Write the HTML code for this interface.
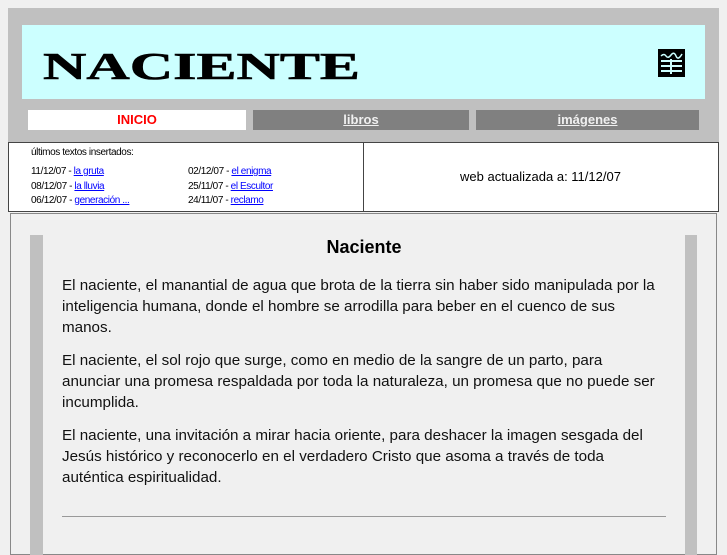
<!DOCTYPE html>
<html><head><meta charset="utf-8"><style>
body{margin:0;background:#f0f0f0;font-family:"Liberation Sans",sans-serif;width:727px;height:545px;overflow:hidden;position:relative}
.abs{position:absolute}
a{color:#0000ff}
.tab{position:absolute;top:110px;height:20px;line-height:20px;text-align:center;font-size:13px;font-weight:bold}
.tab a{color:#f0f0f0}
.small{font-size:10px;color:#000;letter-spacing:-0.4px}
p{margin:0 0 12px 0}
</style></head><body>
<div class="abs" style="left:8px;top:8px;width:711px;height:134px;background:#c0c0c0"></div>
<div class="abs" style="left:22px;top:25px;width:683px;height:74px;background:#ccffff"></div>
<div class="abs" style="left:43px;top:45px;font-family:'Liberation Serif',serif;font-weight:900;font-size:38px;line-height:44px;white-space:nowrap;transform:scaleX(1.58);transform-origin:left top;-webkit-text-stroke:0.6px #000">NACIENTE</div>
<svg class="abs" style="left:658px;top:49px" width="27" height="28" viewBox="0 0 27 28">
<rect width="27" height="28" fill="#000"/>
<path d="M3 7 Q6 4 8 7 T13 6 T18 7 T24 5" stroke="#ccffff" stroke-width="1.5" fill="none"/>
<rect x="3" y="11" width="21" height="2" fill="#ccffff"/><rect x="3" y="16" width="21" height="2" fill="#ccffff"/><rect x="3" y="21" width="21" height="2" fill="#ccffff"/>
<rect x="12" y="10" width="2" height="15" fill="#ccffff"/>
</svg>
<div class="tab" style="left:28px;width:218px;background:#fff;color:#ff0000">INICIO</div>
<div class="tab" style="left:253px;width:216px;background:#808080"><a href="#">libros</a></div>
<div class="tab" style="left:476px;width:223px;background:#808080"><a href="#">imágenes</a></div>
<div class="abs" style="left:8px;top:142px;width:709px;height:68px;background:#fff;border:1px solid #444"></div>
<div class="abs" style="left:363px;top:142px;width:1px;height:70px;background:#444"></div>
<div class="abs small" style="left:31px;top:147px">últimos textos insertados:</div>
<div class="abs small" style="left:31px;top:165px;line-height:14.5px">11/12/07 - <a href="#">la gruta</a><br>08/12/07 - <a href="#">la lluvia</a><br>06/12/07 - <a href="#">generación ...</a></div>
<div class="abs small" style="left:188px;top:165px;line-height:14.5px">02/12/07 - <a href="#">el enigma</a><br>25/11/07 - <a href="#">el Escultor</a><br>24/11/07 - <a href="#">reclamo</a></div>
<div class="abs" style="left:460px;top:169px;font-size:13px">web actualizada a: 11/12/07</div>
<div class="abs" style="left:10px;top:213px;width:705px;height:340px;border:1px solid #888;background:#f0f0f0"></div>
<div class="abs" style="left:30px;top:235px;width:13px;height:320px;background:#c0c0c0"></div>
<div class="abs" style="left:685px;top:235px;width:12px;height:320px;background:#c0c0c0"></div>
<div class="abs" style="left:43px;top:237px;width:642px;text-align:center;font-weight:bold;font-size:18px">Naciente</div>
<div class="abs" style="left:62px;top:275px;width:598px;font-size:15.2px;line-height:21px;color:#111">
<p>El naciente, el manantial de agua que brota de la tierra sin haber sido manipulada por la inteligencia humana, donde el hombre se arrodilla para beber en el cuenco de sus manos.</p>
<p>El naciente, el sol rojo que surge, como en medio de la sangre de un parto, para anunciar una promesa respaldada por toda la naturaleza, un promesa que no puede ser incumplida.</p>
<p>El naciente, una invitación a mirar hacia oriente, para deshacer la imagen sesgada del Jesús histórico y reconocerlo en el verdadero Cristo que asoma a través de toda auténtica espiritualidad.</p>
</div>
<div class="abs" style="left:62px;top:516px;width:604px;height:1px;background:#999"></div>
</body></html>
